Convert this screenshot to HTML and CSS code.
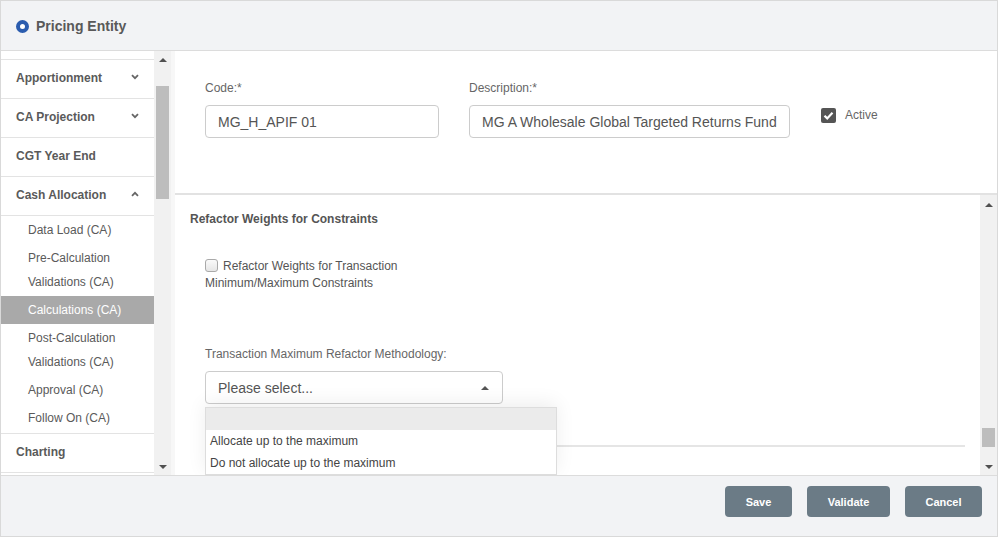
FILE: index.html
```html
<!DOCTYPE html>
<html lang="en">
<head>
<meta charset="utf-8">
<title>Pricing Entity</title>
<link rel="stylesheet" href="styles.css">
</head>
<body>
<div class="app">
  <header class="hdr">
    <span class="hdr-icon"></span>
    <span class="hdr-title">Pricing Entity</span>
  </header>
  <div class="main">
    <aside class="side">
      <nav class="menu">
        <div class="mi mi-cut"></div>
        <div class="mi"><span>Apportionment</span><svg class="chev" width="8" height="6" viewBox="0 0 8 6"><path d="M1 1.2 L4 4.2 L7 1.2" /></svg></div>
        <div class="mi"><span>CA Projection</span><svg class="chev" width="8" height="6" viewBox="0 0 8 6"><path d="M1 1.2 L4 4.2 L7 1.2" /></svg></div>
        <div class="mi"><span>CGT Year End</span></div>
        <div class="mi"><span>Cash Allocation</span><svg class="chev" width="8" height="6" viewBox="0 0 8 6"><path d="M1 4.8 L4 1.8 L7 4.8" /></svg></div>
        <div class="sub">
          <div class="si">Data Load (CA)</div>
          <div class="si">Pre-Calculation<br>Validations (CA)</div>
          <div class="si active">Calculations (CA)</div>
          <div class="si">Post-Calculation<br>Validations (CA)</div>
          <div class="si">Approval (CA)</div>
          <div class="si">Follow On (CA)</div>
        </div>
        <div class="mi"><span>Charting</span></div>
      </nav>
      <div class="vscroll">
        <div class="vs-btn"><span class="tri-up"></span></div>
        <div class="vs-track"><div class="thumb side-thumb"></div></div>
        <div class="vs-btn"><span class="tri-down"></span></div>
      </div>
    </aside>
    <div class="gap"></div>
    <section class="content">
      <div class="top">
        <div class="field">
          <label class="lbl">Code:*</label>
          <div class="input code">MG_H_APIF 01</div>
        </div>
        <div class="field">
          <label class="lbl">Description:*</label>
          <div class="input desc">MG A Wholesale Global Targeted Returns Fund</div>
        </div>
        <div class="active-box">
          <span class="cb-on"><svg width="15" height="15" viewBox="0 0 15 15"><path d="M3.5 7.8 L6.2 10.4 L11.5 4.8" /></svg></span>
          <span class="active-lbl">Active</span>
        </div>
      </div>
      <div class="lower">
        <div class="lower-body">
          <h3 class="sec-title">Refactor Weights for Constraints</h3>
          <div class="chk-row"><span class="cb-off"></span>Refactor Weights for Transaction Minimum/Maximum Constraints</div>
          <label class="lbl method-lbl">Transaction Maximum Refactor Methodology:</label>
          <div class="select-wrap">
            <div class="select"><span>Please select...</span><span class="caret"></span></div>
            <ul class="dropdown">
              <li class="opt empty"></li>
              <li class="opt">Allocate up to the maximum</li>
              <li class="opt">Do not allocate up to the maximum</li>
            </ul>
          </div>
          <div class="rule"></div>
        </div>
        <div class="vscroll">
          <div class="vs-btn vs-btn-top"><span class="tri-up"></span></div>
          <div class="vs-track"><div class="thumb main-thumb"></div></div>
          <div class="vs-btn"><span class="tri-down"></span></div>
        </div>
      </div>
    </section>
  </div>
  <footer class="ftr">
    <button class="btn btn-save">Save</button>
    <button class="btn btn-validate">Validate</button>
    <button class="btn btn-cancel">Cancel</button>
  </footer>
</div>
</body>
</html>
```
FILE: styles.css
```css
* { box-sizing: border-box; margin: 0; padding: 0; }
html, body { width: 998px; height: 537px; overflow: hidden; background: #fff; }
body { font-family: "Liberation Sans", Arial, sans-serif; color: #555; }

.app {
  width: 998px; height: 537px;
  border: 1px solid #d9d9d9;
  display: flex; flex-direction: column;
  background: #f2f3f5;
}

/* header */
.hdr {
  height: 50px; flex: none;
  display: flex; align-items: center; gap: 7px;
  padding: 1px 0 0 15px;
  border-bottom: 1px solid #dcdcdc;
}
.hdr-icon {
  width: 13px; height: 13px; border-radius: 50%;
  border: 4px solid #2b5cae; background: #fff;
}
.hdr-title { font-size: 14px; font-weight: bold; color: #595959; }

/* main */
.main { flex: 1; min-height: 0; display: flex; }
.side { width: 170px; display: flex; background: #fff; }
.menu { width: 153px; overflow: hidden; background: #fff; }
.mi {
  height: 39px; border-bottom: 1px solid #e3e3e3;
  display: flex; align-items: center; justify-content: space-between;
  padding: 0 15px 2px 15px;
  font-size: 12px; font-weight: bold; color: #5a5a5a;
}
.mi-cut { height: 9px; padding: 0; }
.chev { margin-top: -3px; }
.chev path { fill: none; stroke: #666; stroke-width: 1.8; }
.sub { border-bottom: 1px solid #e3e3e3; padding-bottom: 1px; }
.si { padding: 2px 0 2px 27px; font-size: 12px; line-height: 24px; color: #5a5a5a; }
.si.active { background: #a9a9a9; color: #fff; }

.vscroll { width: 17px; flex: none; background: #f1f1f1; display: flex; flex-direction: column; }
.vs-btn { height: 17px; flex: none; display: flex; align-items: center; justify-content: center; }
.vs-btn-top { padding-top: 2px; }
.vs-track { flex: 1; }
.thumb { margin-left: 2px; width: 13px; background: #bdbdbd; }
.side-thumb { margin-top: 18px; height: 113px; }
.main-thumb { margin-top: 216px; height: 19px; }
.tri-up { width: 0; height: 0; border-left: 4px solid transparent; border-right: 4px solid transparent; border-bottom: 4px solid #505050; }
.tri-down { width: 0; height: 0; border-left: 4px solid transparent; border-right: 4px solid transparent; border-top: 4px solid #505050; }

.gap { width: 4px; background: #f7f7f7; }

/* content */
.content { flex: 1; min-width: 0; display: flex; flex-direction: column; background: #fff; }
.top {
  height: 144px; flex: none;
  border-bottom: 2px solid #e2e2e2;
  padding: 30px 0 0 30px;
  display: flex; gap: 30px; align-items: flex-start;
}
.lbl { display: block; font-size: 12px; line-height: 14px; color: #666; margin-bottom: 10px; }
.input {
  height: 33px; border: 1px solid #ccc; border-radius: 4px;
  padding: 0 0 0 12px; display: flex; align-items: center;
  font-size: 14px; color: #555; white-space: nowrap; overflow: hidden;
}
.code { width: 234px; }
.desc { width: 321px; }
.active-box { margin: 27px 0 0 1px; display: flex; align-items: center; gap: 9px; }
.cb-on { width: 15px; height: 15px; border-radius: 2px; background: #555; display: block; }
.cb-on svg { display: block; }
.cb-on path { fill: none; stroke: #fff; stroke-width: 2.2; }
.active-lbl { font-size: 12px; line-height: 15px; color: #666; }

.lower { flex: 1; min-height: 0; display: flex; }
.lower-body { flex: 1; padding: 17px 15px 0 15px; overflow: hidden; }
.sec-title { font-size: 12px; line-height: 14px; font-weight: bold; color: #555; }
.chk-row { margin: 32px 0 0 15px; width: 210px; font-size: 12px; line-height: 17px; color: #555; }
.cb-off {
  display: inline-block; width: 13px; height: 13px; margin-right: 5px;
  vertical-align: -2px;
  border: 1px solid #a9a9a9; border-radius: 3px;
  background: linear-gradient(#fafafa, #e6e6e6);
}
.method-lbl { margin: 55px 0 10px 15px; }
.select-wrap { position: relative; margin-left: 15px; width: 298px; }
.select {
  height: 33px; border: 1px solid #ccc; border-radius: 4px;
  padding: 0 13px 0 12px; display: flex; align-items: center; justify-content: space-between;
  font-size: 14px; color: #555;
}
.caret { width: 0; height: 0; border-left: 4px solid transparent; border-right: 4px solid transparent; border-bottom: 4px solid #555; margin-top: 1px; }
.dropdown {
  position: absolute; top: 36px; left: 0; width: 352px;
  list-style: none; background: #fff;
  border: 1px solid #ddd;
  box-shadow: 0 -4px 18px rgba(0,0,0,0.07);
  z-index: 5;
}
.opt { height: 22px; line-height: 22px; padding-left: 4px; font-size: 12px; color: #444; }
.opt.empty { background: #ebebeb; }
.rule { margin: 41px 0 0 15px; height: 2px; background: #e5e5e5; }

/* footer */
.ftr {
  height: 61px; flex: none;
  border-top: 1px solid #dcdcdc;
  display: flex; justify-content: flex-end; align-items: flex-start; gap: 15px;
  padding: 10px 15px 0 0;
}
.btn {
  height: 31px; border: none; border-radius: 4px;
  background: #6b7b86; color: #fff;
  font-family: "Liberation Sans", Arial, sans-serif; font-size: 11px; font-weight: bold;
}
.btn-save { width: 67px; }
.btn-validate { width: 83px; }
.btn-cancel { width: 77px; }
```
